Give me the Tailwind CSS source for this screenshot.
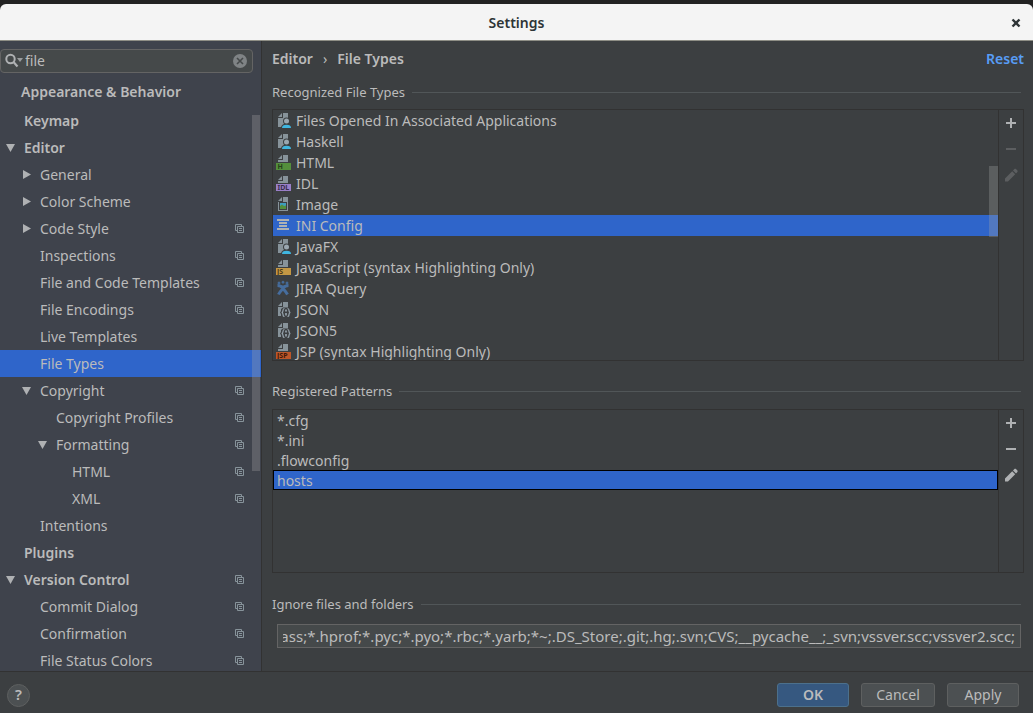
<!DOCTYPE html>
<html lang="en">
<head>
<meta charset="utf-8">
<title>Settings</title>
<script src="https://cdn.jsdelivr.net/npm/@tailwindcss/browser@4"></script>
</head>
<body class="flex h-screen flex-col overflow-hidden bg-[#222222] pt-1 font-['Noto_Sans',sans-serif] text-sm text-[#bbbbbb]">

<svg class="hidden" aria-hidden="true">
  <symbol id="down" viewBox="0 0 11 11"><path d="M1 2h9L5.500 10z" fill="#afb1b3"/></symbol>
  <symbol id="right" viewBox="0 0 11 11"><path d="M2 1v9l8-4.500z" fill="#afb1b3"/></symbol>
  <symbol id="copy" viewBox="0 0 9 9"><path d="M2.500 6.500h-2v-6h6v2M2.500 2.500h6v6h-6zM4 4.500h3M4 6.500h3" fill="none" stroke="#87939a"/></symbol>
  <symbol id="doc" viewBox="0 0 16 16"><path d="M7 1 3 5h4zM8 1v5H3v9h10V1z" fill="#87939a"/></symbol>
  <symbol id="halfdoc" viewBox="0 0 16 16"><path d="M7 1 3 5h4zM8 1v5H3v2h10V1z" fill="#87939a"/></symbol>
  <symbol id="user" viewBox="0 0 16 16">
    <path d="M7 1 3 5h4zM8 1v5H3v9h10V1z" fill="#87939a"/>
    <circle cx="11.500" cy="9" r="3.500" fill="#3c3f41"/><path d="M6 16c0-3 2-4.500 5.500-4.500S16 13 16 16z" fill="#3c3f41"/>
    <circle cx="11.500" cy="9" r="2.500" fill="#9aa7b0"/><path d="M7 16c0-2 1.500-3.200 4.500-3.200S16 14 16 16z" fill="#40b6e0"/>
  </symbol>
  <symbol id="json" viewBox="0 0 16 16">
    <path d="M7 1 3 5h4zM8 1v5H3v9h10V1z" fill="#87939a"/>
    <path d="M6 16v-3l-1-1.500L6 10V8l2-1.500h8V16z" fill="#3c3f41"/>
    <path d="M9.500 7.500c-1.500 0-1.500.500-1.500 2s-.300 1.800-1.300 2c1 .200 1.300.500 1.300 2s0 2 1.500 2M12.500 7.500c1.500 0 1.500.500 1.500 2s.300 1.800 1.300 2c-1 .200-1.300.500-1.300 2s0 2-1.500 2" fill="none" stroke="#9aa7b0" stroke-width="1.200"/>
    <path d="M11 8.500v2M11 12v2.500" stroke="#9aa7b0" stroke-width="1.600"/>
  </symbol>
  <symbol id="plus" viewBox="0 0 16 16"><path d="M7 3h2v4h4v2H9v4H7V9H3V7h4z"/></symbol>
  <symbol id="minus" viewBox="0 0 16 16"><path d="M3 7h10v2H3z"/></symbol>
  <symbol id="pencil" viewBox="0 0 16 16"><path d="M2 11.500 9.200 4.300l3 3L5 14.500H2zM10 3.500l1.200-1.200c.600-.600 1.400-.600 2 0l1 1c.600.600.600 1.400 0 2L13 6.500z"/></symbol>
</svg>

<header class="relative flex h-[37px] shrink-0 items-center justify-center rounded-t-md border-b border-[#8f8f86] bg-[#f4f4f4] pt-0.5 text-[#2e3436]">
  <h1 class="text-sm font-semibold">Settings</h1>
  <button aria-label="Close" class="absolute right-2 flex size-[18px] items-center justify-center">
    <svg class="size-[10px]" viewBox="0 0 10 10"><path d="M1.500 1.500l7 7M8.500 1.500l-7 7" stroke="#2e3436" stroke-width="2.400"/></svg>
  </button>
</header>

<div class="flex min-h-0 flex-1 bg-[#3c3f41]">
  <aside class="relative flex w-[262px] shrink-0 flex-col overflow-hidden border-r border-[#323232] bg-[#3f434c] pt-2">
    <div class="mr-2 flex h-6 shrink-0 items-center rounded-sm border border-[#646464] bg-[#45494a] pr-[5px] pl-1">
      <svg class="h-4 w-5 shrink-0" viewBox="0 0 20 16"><circle cx="5.500" cy="6" r="4.200" fill="none" stroke="#afb1b3" stroke-width="2"/><path d="M8.500 9l4 4.500" stroke="#afb1b3" stroke-width="2.200"/><path d="M12 5h6l-3 4z" fill="#9a9c9e"/></svg>
      <input aria-label="Search settings" value="file" class="min-w-0 flex-1 bg-transparent outline-none">
      <button aria-label="Clear search"><svg class="size-[14px]" viewBox="0 0 14 14"><circle cx="7" cy="7" r="7" fill="#7f8385"/><path d="M4 4l6 6M10 4l-6 6" stroke="#45494a" stroke-width="1.600"/></svg></button>
    </div>
    <h2 class="mt-1 flex h-[30px] shrink-0 items-center pl-[21px] font-semibold">Appearance &amp; Behavior</h2>
    <ul class="*:flex *:h-[27px] *:items-center *:pr-[17px]">
      <li class="pl-6 font-semibold">Keymap</li>
      <li class="pl-[5px] font-semibold"><svg class="mr-2 size-[11px]"><use href="#down"/></svg>Editor</li>
      <li class="pl-[21px]"><svg class="mr-2 size-[11px]"><use href="#right"/></svg>General</li>
      <li class="pl-[21px]"><svg class="mr-2 size-[11px]"><use href="#right"/></svg>Color Scheme</li>
      <li class="pl-[21px]"><svg class="mr-2 size-[11px]"><use href="#right"/></svg>Code Style<svg class="ml-auto size-[9px]"><use href="#copy"/></svg></li>
      <li class="pl-10">Inspections<svg class="ml-auto size-[9px]"><use href="#copy"/></svg></li>
      <li class="pl-10">File and Code Templates<svg class="ml-auto size-[9px]"><use href="#copy"/></svg></li>
      <li class="pl-10">File Encodings<svg class="ml-auto size-[9px]"><use href="#copy"/></svg></li>
      <li class="pl-10">Live Templates</li>
      <li class="bg-[#2f65ca] pl-10">File Types</li>
      <li class="pl-[21px]"><svg class="mr-2 size-[11px]"><use href="#down"/></svg>Copyright<svg class="ml-auto size-[9px]"><use href="#copy"/></svg></li>
      <li class="pl-14">Copyright Profiles<svg class="ml-auto size-[9px]"><use href="#copy"/></svg></li>
      <li class="pl-[37px]"><svg class="mr-2 size-[11px]"><use href="#down"/></svg>Formatting<svg class="ml-auto size-[9px]"><use href="#copy"/></svg></li>
      <li class="pl-18">HTML<svg class="ml-auto size-[9px]"><use href="#copy"/></svg></li>
      <li class="pl-18">XML<svg class="ml-auto size-[9px]"><use href="#copy"/></svg></li>
      <li class="pl-10">Intentions</li>
      <li class="pl-6 font-semibold">Plugins</li>
      <li class="pl-[5px] font-semibold"><svg class="mr-2 size-[11px]"><use href="#down"/></svg>Version Control<svg class="ml-auto size-[9px]"><use href="#copy"/></svg></li>
      <li class="pl-10">Commit Dialog<svg class="ml-auto size-[9px]"><use href="#copy"/></svg></li>
      <li class="pl-10">Confirmation<svg class="ml-auto size-[9px]"><use href="#copy"/></svg></li>
      <li class="pl-10">File Status Colors<svg class="ml-auto size-[9px]"><use href="#copy"/></svg></li>
    </ul>
    <div class="absolute top-[74px] right-px h-[356px] w-2 bg-[#a6a6a6]/30"></div>
  </aside>

  <main class="flex min-w-0 flex-1 flex-col pr-[9px] pb-[23px] pl-[10px]">
    <nav class="flex h-9 shrink-0 items-center font-semibold">
      <span>Editor</span><span class="mx-[10px] font-normal">›</span><span>File Types</span>
      <a href="#" class="ml-auto text-[#589df6]">Reset</a>
    </nav>

    <h3 class="mb-0.5 flex h-[30px] shrink-0 items-center gap-[7px] pr-[3px] text-[13px] after:h-px after:flex-1 after:bg-[#515658]">Recognized File Types</h3>
    <section class="flex min-h-0 flex-[252] border border-[#323232]">
      <div class="relative min-w-0 flex-1 overflow-hidden">
        <ul class="*:flex *:h-[21px] *:items-center *:gap-[5px] *:pl-0.5">
          <li><svg class="mb-px size-4"><use href="#user"/></svg>Files Opened In Associated Applications</li>
          <li><svg class="mb-px size-4"><use href="#user"/></svg>Haskell</li>
          <li><svg class="mb-px size-4" viewBox="0 0 16 16"><use href="#halfdoc"/><path d="M1 9h15v7H1z" fill="#548f3c"/><text x="2.500" y="15" font-size="7" font-weight="700" fill="#26401c">H</text></svg>HTML</li>
          <li><svg class="mb-px size-4" viewBox="0 0 16 16"><use href="#halfdoc"/><path d="M1 9h15v7H1z" fill="#9a7fc8"/><text x="2.500" y="15" font-size="7" font-weight="700" fill="#382d4b">IDL</text></svg>IDL</li>
          <li><svg class="mb-px size-4" viewBox="0 0 16 16"><use href="#doc"/><path d="M4 6h8v8H4z" fill="#3c3f41"/><path d="M5 7h6v3H5z" fill="#3e9fbf"/><path d="M5 10l2-1.500L9 10l2-.500V13H5z" fill="#548f3c"/></svg>Image</li>
          <li class="bg-[#2f65ca]"><svg class="mb-px size-4" viewBox="0 0 16 16"><path d="M2 2h12v2H2zM4 5h8v2H4zM4 8h8v2H4zM2 11h12v2H2z" fill="#afb1b3"/></svg>INI Config</li>
          <li><svg class="mb-px size-4"><use href="#user"/></svg>JavaFX</li>
          <li><svg class="mb-px size-4" viewBox="0 0 16 16"><use href="#halfdoc"/><path d="M1 9h15v7H1z" fill="#c39744"/><text x="2" y="15" font-size="7" font-weight="700" fill="#4b3817">JS</text></svg>JavaScript (syntax Highlighting Only)</li>
          <li><svg class="mb-px size-4" viewBox="0 0 16 16" fill="none" stroke="#466d9d"><path d="M2.500 5.500c3 0 4.500 1.500 5.500 3s2.500 2.500 4.500 6M13.500 5.500c-3 0-4.500 1.500-5.500 3s-3 2.500-4.500 6" stroke-width="3"/><circle cx="4" cy="3" r="1" fill="#466d9d"/><circle cx="8" cy="2.200" r="1" fill="#466d9d"/><circle cx="12" cy="3" r="1" fill="#466d9d"/><path d="M6 5.500c1 .800 3 .800 4 0"/></svg>JIRA Query</li>
          <li><svg class="mb-px size-4"><use href="#json"/></svg>JSON</li>
          <li><svg class="mb-px size-4"><use href="#json"/></svg>JSON5</li>
          <li><svg class="mb-px size-4" viewBox="0 0 16 16"><use href="#halfdoc"/><path d="M1 9h15v7H1z" fill="#bd5629"/><text x="2" y="15" font-size="7" font-weight="700" fill="#40190a">JSP</text></svg>JSP (syntax Highlighting Only)</li>
        </ul>
        <div class="absolute top-14 right-0 h-[71px] w-[9px] bg-[#a6a6a6]/30"></div>
      </div>
      <div class="flex w-[25px] flex-col border-l border-[#323232] *:flex *:h-[26px] *:items-center *:justify-center">
        <button aria-label="Add file type"><svg class="size-4" fill="#afb1b3"><use href="#plus"/></svg></button>
        <button aria-label="Remove file type" disabled><svg class="size-4" fill="#5c5e60"><use href="#minus"/></svg></button>
        <button aria-label="Edit file type" disabled><svg class="size-4" fill="#5c5e60"><use href="#pencil"/></svg></button>
      </div>
    </section>

    <h3 class="mt-4 mb-0.5 flex h-[30px] shrink-0 items-center gap-[7px] pr-[3px] text-[13px] after:h-px after:flex-1 after:bg-[#515658]">Registered Patterns</h3>
    <section class="flex min-h-0 flex-[164] border border-[#323232]">
      <ul class="min-w-0 flex-1 overflow-hidden *:flex *:h-5 *:items-center *:border *:pt-0.5 *:pl-[3px]">
        <li class="border-transparent">*.cfg</li>
        <li class="border-transparent">*.ini</li>
        <li class="border-transparent">.flowconfig</li>
        <li class="border-black bg-[#2f65ca]">hosts</li>
      </ul>
      <div class="flex w-[25px] flex-col border-l border-[#323232] *:flex *:h-[26px] *:items-center *:justify-center">
        <button aria-label="Add pattern"><svg class="size-4" fill="#afb1b3"><use href="#plus"/></svg></button>
        <button aria-label="Remove pattern"><svg class="size-4" fill="#afb1b3"><use href="#minus"/></svg></button>
        <button aria-label="Edit pattern"><svg class="size-4" fill="#afb1b3"><use href="#pencil"/></svg></button>
      </div>
    </section>

    <label for="ignore" class="mt-4 mb-[5px] flex h-[30px] shrink-0 items-center gap-[7px] pr-[3px] text-[13px] after:h-px after:flex-1 after:bg-[#515658]">Ignore files and folders</label>
    <input id="ignore" class="mr-[3px] ml-[5px] h-6 shrink-0 border border-[#646464] bg-[#45494a] px-[5px] text-[15px] outline-none" value="*.class;*.hprof;*.pyc;*.pyo;*.rbc;*.yarb;*~;.DS_Store;.git;.hg;.svn;CVS;__pycache__;_svn;vssver.scc;vssver2.scc;">
  </main>
</div>

<footer class="flex shrink-0 items-center gap-3 border-t border-[#323232] bg-[#3c3f41] px-[14px] pt-[11px] pb-1.5 pl-[7px]">
  <button aria-label="Help" class="mr-auto flex size-[23px] items-center justify-center rounded-full border border-[#5e6060] bg-[#4c5052] text-[15px] font-semibold">?</button>
  <button class="h-6 w-[72px] rounded-[3px] border border-[#4c708c] bg-[#365880] font-semibold">OK</button>
  <button class="h-6 w-[74px] rounded-[3px] border border-[#5e6060] bg-[#4c5052]">Cancel</button>
  <button class="h-6 w-[72px] rounded-[3px] border border-[#5e6060] bg-[#4c5052]">Apply</button>
</footer>

<script>
  // Show the end of the ignore list, as after typing into it.
  const ignore = document.getElementById('ignore');
  ignore.scrollLeft = ignore.scrollWidth;
</script>
</body>
</html>
